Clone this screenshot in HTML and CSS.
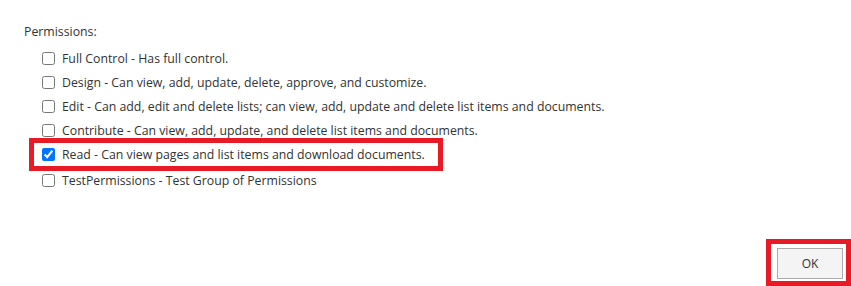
FILE: index.html
```html
<!DOCTYPE html>
<html>
<head>
<meta charset="utf-8">
<link rel="stylesheet" href="styles.css">
</head>
<body>
<div class="page">
  <div class="heading">Permissions:</div>
  <div class="list">
    <label class="row"><input type="checkbox"><span>Full Control - Has full control.</span></label>
    <label class="row"><input type="checkbox"><span>Design - Can view, add, update, delete, approve, and customize.</span></label>
    <label class="row"><input type="checkbox"><span>Edit - Can add, edit and delete lists; can view, add, update and delete list items and documents.</span></label>
    <label class="row"><input type="checkbox"><span>Contribute - Can view, add, update, and delete list items and documents.</span></label>
    <label class="row highlight"><input type="checkbox" checked><span>Read - Can view pages and list items and download documents.</span></label>
    <label class="row"><input type="checkbox"><span>TestPermissions - Test Group of Permissions</span></label>
  </div>
  <div class="footer">
    <div class="btn-frame"><button class="ok">OK</button></div>
  </div>
</div>
</body>
</html>
```
FILE: styles.css
```css
html, body {
  margin: 0;
  padding: 0;
  background: #ffffff;
}
.page {
  height: 286px;
  box-sizing: border-box;
  display: flex;
  flex-direction: column;
  padding-top: 23px;
  font-family: "Open Sans", "Noto Sans", sans-serif;
  font-size: 12.3px;
  color: #333333;
}
.heading {
  padding-left: 24px;
  line-height: 18px;
  height: 18px;
  margin-bottom: 5px;
}
.list {
  display: flex;
  flex-direction: column;
  align-items: flex-start;
  margin-left: 34px;
}
.row {
  display: flex;
  align-items: center;
  height: 24px;
  padding-left: 8px;
  white-space: nowrap;
}
.row input {
  margin: 0 7px 0 0;
  width: 13px;
  height: 13px;
}
.highlight {
  outline: 5px solid #e81a25;
  height: 23px;
  padding-right: 13px;
  margin-top: 1px;
  margin-bottom: 2px;
}
.footer {
  margin-top: auto;
  display: flex;
  justify-content: flex-end;
}
.btn-frame {
  border: 5px solid #e81a25;
  padding: 4px 3px 2px 6px;
}
.ok {
  width: 66px;
  height: 31px;
  box-sizing: border-box;
  border: 1px solid #ababab;
  background: #f4f4f4;
  font-family: "Open Sans", "Noto Sans", sans-serif;
  font-size: 12px;
  color: #333333;
  padding: 0;
  margin: 0;
  display: block;
}
```
